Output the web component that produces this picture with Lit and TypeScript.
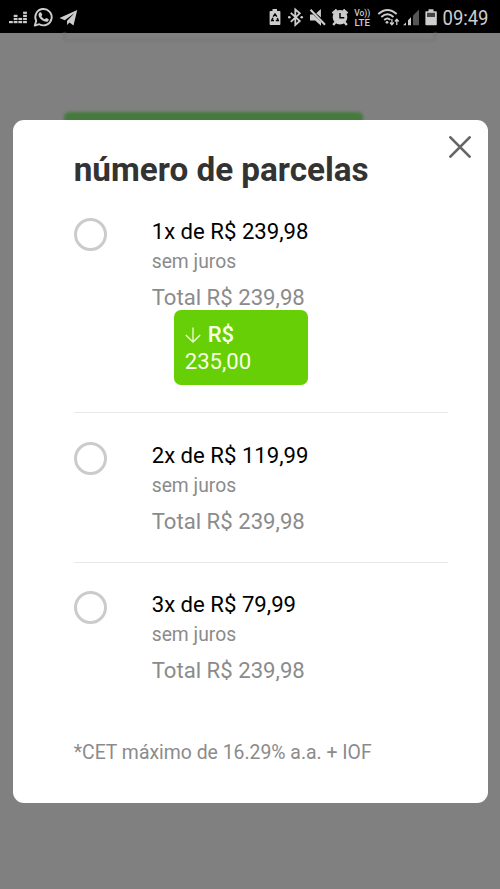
import { LitElement, html, svg, css, nothing } from "lit";
import { customElement, property } from "lit/decorators.js";

interface Plan {
  label: string;
  total: string;
  discount?: string;
}

const plans: Plan[] = [
  { label: "1x de R$ 239,98", total: "Total R$ 239,98", discount: "235,00" },
  { label: "2x de R$ 119,99", total: "Total R$ 239,98" },
  { label: "3x de R$ 79,99", total: "Total R$ 239,98" },
];

@customElement("status-bar")
class StatusBar extends LitElement {
  static styles = css`
    :host {
      display: block;
      height: 33px;
      background: #000;
    }
    .icons {
      display: block;
    }
    .clock {
      font: 400 20px Roboto, sans-serif;
      fill: #cdcdcd;
    }
    .volte {
      font: 500 8.700px Roboto, sans-serif;
      fill: #cdcdcd;
    }
  `;

  render() {
    // Equalizer columns: x position and number of lit segments.
    const columns = [[9, 1], [13.7, 3], [18.4, 2], [23.1, 4]];
    return html`
      <svg class="icons" width="500" height="33" viewBox="0 0 500 33" fill="#cdcdcd">
        ${columns.map(([x, n]) =>
          Array.from({ length: n }, (_, i) => svg`<rect x=${x} y=${21 - i * 3.1} width="3.8" height="2.2" />`)
        )}
        <g fill="none" stroke="#cdcdcd" stroke-width="1.9">
          <path d="M34.8 25.6 L36.2 20.9 A8.2 8.2 0 1 1 39.3 24.2 Z" stroke-linejoin="round" />
        </g>
        <path d="M39.6 12.6c.6-.6 1.6-.5 1.9.3l.7 1.6c.2.5-.7 1.3-.8 1.7.8 1.5 1.9 2.4 3.4 3 .5-.1 1.1-1.3 1.6-1.1l2 1c.7.4.2 1.8-.5 2.3-2.8 1.9-10.3-3.3-9.3-7.4.1-.5.5-1 1-1.400z" />
        <path d="M77.2 10 L59.5 18 L64.8 20.2 L74.6 13 L67 21 L67.2 25 L69.5 22.6 L73.5 25.4 Z" />

        <path d="M272.500 9h4.500v2h2.500q.9 0 .9.9v12.200q0 .9-.9.9h-9q-.9 0-.9-.9V11.900q0-.9.9-.9h2z" />
        <path d="M273.200 16.700 L275 14 L276.800 16.700 M277.300 18 L278.300 20.500 H275.800 M274 20.500 H271.700 L272.900 17.800" fill="none" stroke="#000" stroke-width="1.400" />
        <path d="M290.800 12.800 L299.800 21 L295.300 25 V9.500 L299.800 13.300 L290.800 21.800" fill="none" stroke="#cdcdcd" stroke-width="1.800" />
        <circle cx="289.300" cy="17.300" r="1.300" />
        <circle cx="301.700" cy="17.300" r="1.300" />
        <path d="M310 14.500h3.200l7.800 7.500v3.700l-5.800-5.200H310z M316.200 13.200 L320.900 8.900 V17.600 Z" />
        <path d="M310.500 9.800 L325 24.700" fill="none" stroke="#cdcdcd" stroke-width="2.100" />
        <circle cx="340" cy="17.300" r="7.300" />
        <path d="M332.500 13.300 L336.700 9.700 M347.500 13.300 L343.300 9.700 M335.200 22.500 L333.200 25 M344.800 22.500 L346.800 25" stroke="#cdcdcd" stroke-width="2.400" />
        <path d="M340 13 V17.800 H344.300" fill="none" stroke="#000" stroke-width="1.400" />
        <text class="volte" x="354.300" y="15.500" textLength="16" lengthAdjust="spacingAndGlyphs">Vo))</text>
        <text class="volte" x="354.500" y="25.500" textLength="15.500" lengthAdjust="spacingAndGlyphs">LTE</text>
        <path d="M378.300 14 Q387.500 5.800 396.700 14 M381.300 17 Q387.500 11.500 393.500 17 M384.200 19.900 Q387.500 17.200 390.400 19.900" fill="none" stroke="#cdcdcd" stroke-width="1.900" />
        <circle cx="387" cy="22.300" r="1.400" />
        <path d="M391.900 19v5.500 M390 22.500l1.900 2.200 1.900-2.200 M396.800 25v-5.500 M394.900 21.500l1.900-2.200 1.900 2.200" fill="none" stroke="#cdcdcd" stroke-width="1.300" />
        <path d="M403 25.200 L406 22.500 V25.200 Z M408 20.300 L411 17.300 V25.200 H408 Z" />
        <path d="M413 15.500 L419 9.500 V25.200 H413 Z" fill="#555" />
        <path d="M428.500 9.300h5v2h2.500q.8 0 .8.800v12.300q0 .8-.8.800h-9.800q-.8 0-.8-.8V12.100q0-.8.8-.8h2.300z" />
        <rect x="427" y="12.800" width="8" height="4.200" fill="#444" />
        <text class="clock" x="442.500" y="25" textLength="46" lengthAdjust="spacingAndGlyphs">09:49</text>
      </svg>
    `;
  }
}

@customElement("plan-option")
class PlanOption extends LitElement {
  @property({ attribute: false }) plan!: Plan;

  static styles = css`
    :host {
      display: flex;
      gap: 45px;
      padding: 28.5px 0 27.8px;
      border-bottom: 1px solid #e8e8e8;
    }
    :host([last]) {
      border-bottom-color: transparent;
    }
    :host([discounted]) {
      padding-top: 0;
    }
    .radio {
      box-sizing: border-box;
      flex: none;
      width: 33px;
      height: 33px;
      border: 3.5px solid #cbcbcb;
      border-radius: 50%;
    }
    .details {
      flex: 1;
      color: #8b8b8b;
    }
    .label {
      font-size: 22.15px;
      line-height: 26px;
      color: #000;
    }
    .interest {
      margin: 5px 0 9px;
      font-size: 19.300px;
      line-height: 26px;
    }
    .total {
      font-size: 22.15px;
      line-height: 26px;
    }
    .badge {
      box-sizing: border-box;
      width: 134px;
      height: 75px;
      margin-left: 22px;
      padding: 11px;
      border-radius: 7px;
      background: #66cf06;
      color: #f7ffe8;
      font-size: 22.15px;
      line-height: 27px;
    }
    .arrow {
      margin-right: 7px;
      vertical-align: -1px;
    }
    .currency {
      font-weight: 500;
    }
  `;

  render() {
    const { label, total, discount } = this.plan;
    return html`
      <div class="radio"></div>
      <div class="details">
        <div class="label">${label}</div>
        <div class="interest">sem juros</div>
        <div class="total">${total}</div>
        ${discount
          ? html`<div class="badge">
              <svg class="arrow" width="16" height="16" viewBox="0 0 16 16" fill="none" stroke="#f0ffd8" stroke-width="1.300"><path d="M8 .5V15M.8 8 8 15l7.200-7" /></svg><span class="currency">R$</span><br />${discount}
            </div>`
          : nothing}
      </div>
    `;
  }
}

@customElement("app-root")
class AppRoot extends LitElement {
  static styles = css`
    :host {
      display: block;
      position: relative;
      height: 889px;
      overflow: hidden;
      background: #808080;
      font-family: Roboto, sans-serif;
    }
    .field {
      box-sizing: border-box;
      width: 374px;
      height: 9px;
      margin-left: 63px;
      border: 3px solid #7a7a7a;
      border-top: 0;
      border-radius: 0 0 5px 5px;
      filter: blur(1px);
    }
    .buy {
      width: 299px;
      height: 40px;
      margin: 70px 0 0 64px;
      border-radius: 5px;
      background: #457a3c;
      filter: blur(1.500px);
    }
    .dialog {
      position: absolute;
      top: 119.500px;
      left: 12.500px;
      box-sizing: border-box;
      width: 475px;
      height: 683.300px;
      padding: 30.500px 39.500px 0 61.200px;
      border-radius: 11px;
      background: #fff;
    }
    .close {
      position: absolute;
      top: 16.500px;
      right: 17px;
    }
    .title {
      margin: 0 0 27.700px;
      font-size: 33.250px;
      font-weight: 700;
      line-height: 40px;
      color: #333;
      white-space: nowrap;
    }
    .note {
      margin-top: 27.800px;
      font-size: 19.400px;
      line-height: 26px;
      color: #8b8b8b;
      white-space: nowrap;
    }
  `;

  render() {
    return html`
      <status-bar></status-bar>
      <div class="field"></div>
      <div class="buy"></div>
      <section class="dialog">
        <svg class="close" width="22" height="22" viewBox="0 0 22 22" stroke="#666" stroke-width="2.700" stroke-linecap="round"><path d="M1.400 1.400 20.600 20.600M20.600 1.400 1.400 20.600" /></svg>
        <h1 class="title">número de parcelas</h1>
        ${plans.map(
          (plan, i) => html`<plan-option
            .plan=${plan}
            ?discounted=${!!plan.discount}
            ?last=${i === plans.length - 1}
          ></plan-option>`
        )}
        <div class="note">*CET máximo de 16.29% a.a. + IOF</div>
      </section>
    `;
  }
}
